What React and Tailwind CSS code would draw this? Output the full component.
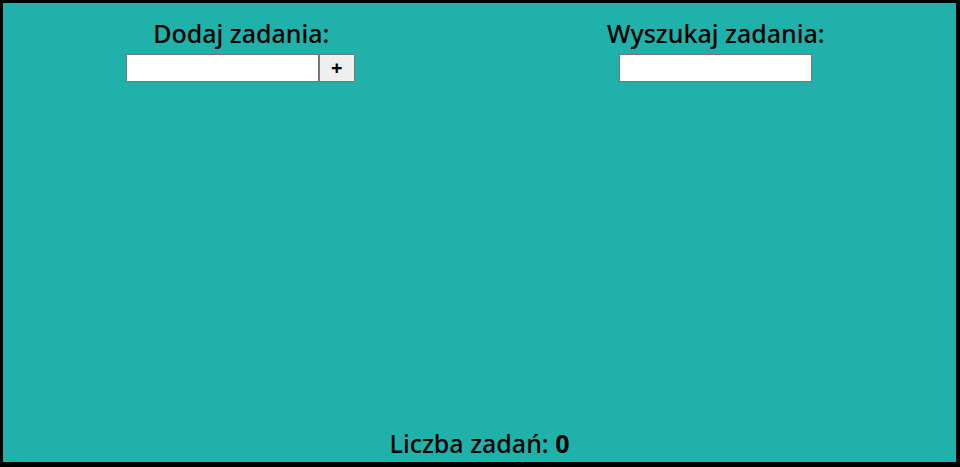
import React, { useState } from 'react'

const App = () => {
  const [tasks, setTasks] = useState([])
  const [text, setText] = useState('')
  const [query, setQuery] = useState('')

  const addTask = () => {
    if (!text.trim()) return
    setTasks([...tasks, text.trim()])
    setText('')
  }

  const visible = tasks.filter((t) => t.toLowerCase().includes(query.toLowerCase()))

  return (
    <div className="w-[960px] h-[467px] bg-black pt-[3px] pl-[3px] pr-[4px] pb-[5px]">
      <div
        className="h-full bg-[#20b2aa] flex flex-col text-black"
        style={{ fontFamily: '"Noto Sans", sans-serif' }}
      >
        <div className="grid grid-cols-2 pt-[14px]">
          <div className="flex flex-col items-center">
            <h2 className="text-[25px] leading-[32px] font-medium">Dodaj zadania:</h2>
            <div className="flex mt-[5px] -translate-x-[1px]">
              <input
                value={text}
                onChange={(e) => setText(e.target.value)}
                className="w-[193px] h-[28px] bg-white border border-[#767676] px-1 text-[13px] outline-none"
              />
              <button
                onClick={addTask}
                className="w-[36px] h-[28px] bg-[#efefef] border border-[#767676] text-[20px] font-bold leading-none"
              >
                +
              </button>
            </div>
            <ul className="mt-2">
              {visible.map((t, i) => (
                <li key={i} className="text-[18px]">{t}</li>
              ))}
            </ul>
          </div>
          <div className="flex flex-col items-center -translate-x-[2px]">
            <h2 className="text-[25px] leading-[32px] font-medium">Wyszukaj zadania:</h2>
            <div className="flex mt-[5px]">
              <input
                value={query}
                onChange={(e) => setQuery(e.target.value)}
                className="w-[193px] h-[28px] bg-white border border-[#767676] px-1 text-[13px] outline-none"
              />
            </div>
          </div>
        </div>
        <div className="mt-auto pb-[4px] text-center text-[25px] leading-[30px] font-medium">
          Liczba zadań: <span className="font-bold">{tasks.length}</span>
        </div>
      </div>
    </div>
  )
}

export default App
